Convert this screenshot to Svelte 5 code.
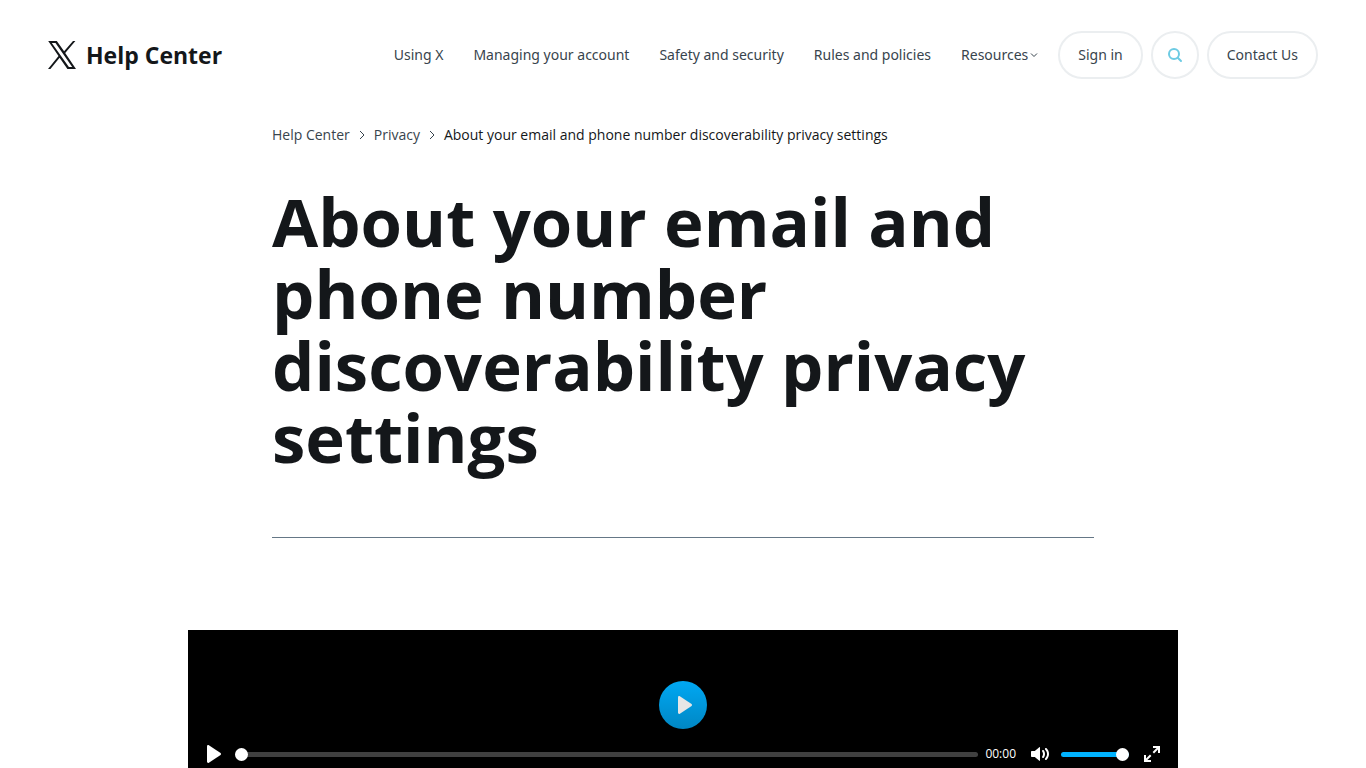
<script lang="ts">
	const title = 'About your email and phone number discoverability privacy settings';

	const navLinks = ['Using X', 'Managing your account', 'Safety and security', 'Rules and policies'];
	const crumbs = ['Help Center', 'Privacy'];

	let position = $state(0);
	let volume = $state(100);
	let muted = $state(false);
	let playing = $state(false);

	function togglePlay() {
		playing = !playing;
	}
</script>

<header class="header">
	<a class="brand" href="/en">
		<svg class="logo" viewBox="0 0 28 28" aria-hidden="true">
			<path
				fill-rule="evenodd"
				d="M0.2 0H8.8L16.1 10.3L25 0H27.4L17.2 11.9L28 28H19.4L11.6 16.7L2.4 28H0L10.5 15.1ZM3.8 2L20.9 26H24.2L7.5 2Z"
			/>
		</svg>
		<span>Help Center</span>
	</a>

	<nav class="nav" aria-label="Main">
		{#each navLinks as link}
			<a href="/en">{link}</a>
		{/each}
		<button class="menu" type="button">
			Resources
			<svg class="caret" viewBox="0 0 8 6" aria-hidden="true">
				<path d="M1 1.5L4 4.5L7 1.5" />
			</svg>
		</button>
	</nav>

	<div class="actions">
		<a class="pill" href="/login">Sign in</a>
		<button class="pill round" type="button" aria-label="Search">
			<svg class="search" viewBox="0 0 16 16" aria-hidden="true">
				<circle cx="7" cy="7" r="5" />
				<path d="M10.8 10.8L14 14" />
			</svg>
		</button>
		<a class="pill" href="/contact">Contact Us</a>
	</div>
</header>

<main>
	<div class="intro">
		<nav class="crumbs" aria-label="Breadcrumb">
			{#each crumbs as crumb}
				<a href="/en">{crumb}</a>
				<svg class="sep" viewBox="0 0 8 10" aria-hidden="true">
					<path d="M2 1L6 5L2 9" />
				</svg>
			{/each}
			<span aria-current="page">{title}</span>
		</nav>
		<h1>{title}</h1>
	</div>

	<section class="player" aria-label="Video player">
		<button class="big-play" type="button" aria-label="Play video" onclick={togglePlay}>
			<svg viewBox="0 0 18 18" aria-hidden="true">
				<path d="M15.56 8.1L3.87.23C3.05-.3 2 .25 2 1.22v15.56c0 .97 1.05 1.52 1.87.99l11.69-7.87c.59-.42.59-1.38 0-1.8z" />
			</svg>
		</button>

		<div class="controls">
			<button type="button" aria-label="Play" onclick={togglePlay}>
				<svg viewBox="0 0 18 18" aria-hidden="true">
					<path d="M15.56 8.1L3.87.23C3.05-.3 2 .25 2 1.22v15.56c0 .97 1.05 1.52 1.87.99l11.69-7.87c.59-.42.59-1.38 0-1.8z" />
				</svg>
			</button>
			<input
				class="seek"
				type="range"
				min="0"
				max="100"
				aria-label="Seek"
				bind:value={position}
				style="--value: {position}%"
			/>
			<span class="time">00:00</span>
			<button class="mute" type="button" aria-label="Mute" aria-pressed={muted} onclick={() => (muted = !muted)}>
				<svg viewBox="0 0 18 18" aria-hidden="true">
					<path d="M15.6 3.3c-.4-.4-1-.4-1.4 0s-.4 1 0 1.4C15.4 5.9 16 7.4 16 9s-.6 3.1-1.8 4.3c-.4.4-.4 1 0 1.4.2.2.5.3.7.3.3 0 .5-.1.7-.3C17.1 13.2 18 11.2 18 9s-.9-4.2-2.4-5.7z" />
					<path d="M11.28 5.28c-.38.39-.37 1.02.03 1.46.44.48.69 1.34.69 2.26s-.25 1.78-.69 2.26c-.37.4-.37 1.08.02 1.47.4.38 1.03.36 1.4-.05C13.54 11.8 14 10.44 14 9s-.46-2.8-1.27-3.68c-.38-.41-1.05-.44-1.45-.04zM3.79 6H.71C.32 6 0 6.32 0 6.71v4.57c0 .4.32.72.71.72h3.08l4.5 3.87c.29.27.71.13.71-.36V2.49c0-.49-.42-.63-.71-.36z" />
				</svg>
			</button>
			<input
				class="volume"
				type="range"
				min="0"
				max="100"
				aria-label="Volume"
				bind:value={volume}
				style="--value: {volume}%"
			/>
			<button class="fullscreen" type="button" aria-label="Enter fullscreen">
				<svg viewBox="0 0 18 18" aria-hidden="true">
					<path d="M10 3h3.6l-4 4L11 8.4l4-4V8h2V1h-7zM7 9.6l-4 4V10H1v7h7v-2H4.4l4-4z" />
				</svg>
			</button>
		</div>
	</section>
</main>

<style>
	:global(body) {
		margin: 0;
		background: #fff;
		color: #14171a;
		font-family: 'Segoe UI', 'Open Sans', 'Noto Sans', sans-serif;
		font-size: 14px;
		line-height: 20px;
	}

	a {
		color: inherit;
		text-decoration: none;
	}

	button {
		padding: 0;
		border: 0;
		background: none;
		color: inherit;
		font: inherit;
		cursor: pointer;
	}

	svg {
		display: block;
	}

	.header {
		display: flex;
		align-items: center;
		padding: 31px 48px 0;
	}

	.brand {
		display: flex;
		align-items: center;
		gap: 10px;
		font-size: 23px;
		font-weight: 700;
		line-height: 32px;
		white-space: nowrap;
	}

	.logo {
		width: 28px;
		height: 28px;
		fill: #14171a;
	}

	.nav,
	.actions {
		display: flex;
		align-items: center;
		color: #38444d;
		font-family: 'Segoe UI', 'Noto Sans', sans-serif;
		line-height: 22px;
		white-space: nowrap;
	}

	.nav {
		gap: 30px;
		margin-left: auto;
	}

	.menu {
		display: flex;
		align-items: center;
		gap: 2px;
	}

	.caret {
		width: 8px;
		height: 6px;
		fill: none;
		stroke: #38444d;
	}

	.actions {
		gap: 8px;
		margin-left: 20px;
	}

	.pill {
		display: flex;
		align-items: center;
		justify-content: center;
		box-sizing: border-box;
		height: 48px;
		padding: 0 18px;
		border: 2px solid #ebeef0;
		border-radius: 24px;
	}

	.round {
		width: 48px;
		padding: 0;
	}

	.search {
		width: 16px;
		height: 16px;
		fill: none;
		stroke: #6dcbe3;
		stroke-width: 2;
		stroke-linecap: round;
	}

	.intro {
		max-width: 822px;
		margin: 46px auto 0;
		padding-bottom: 64px;
		border-bottom: 1px solid #657786;
	}

	.crumbs {
		display: flex;
		align-items: center;
		gap: 8px;
		color: #38444d;
	}

	.crumbs span {
		color: #14171a;
	}

	.sep {
		width: 8px;
		height: 10px;
		fill: none;
		stroke: #38444d;
	}

	h1 {
		margin: 40px 0 0;
		font-size: 67px;
		font-weight: 700;
		line-height: 72px;
	}

	.player {
		position: relative;
		display: flex;
		align-items: flex-end;
		max-width: 990px;
		height: 150px;
		margin: 92px auto 0;
		background: #000;
		color: #fff;
	}

	.player svg {
		width: 18px;
		height: 18px;
		fill: currentColor;
	}

	/* sits centred over the video surface */
	.big-play {
		position: absolute;
		top: 50%;
		left: 50%;
		display: grid;
		place-items: center;
		width: 48px;
		height: 48px;
		padding-left: 4px;
		border-radius: 50%;
		background: linear-gradient(#00a8f3, #0087c4);
		color: #e6e6e6;
		transform: translate(-50%, -50%);
	}

	.controls {
		display: flex;
		align-items: center;
		flex: 1;
		padding: 10px;
	}

	.controls button {
		padding: 7px;
	}

	.seek,
	.volume {
		appearance: none;
		height: 20px;
		margin: 0;
		background: transparent;
	}

	.seek {
		flex: 1;
		min-width: 0;
		margin: 0 7px 0 5px;
	}

	.volume {
		width: 68px;
		margin: 0 7px 0 5px;
	}

	.seek::-webkit-slider-runnable-track,
	.volume::-webkit-slider-runnable-track {
		height: 5px;
		border-radius: 3px;
		background: linear-gradient(to right, #00b3ff var(--value), #404040 var(--value));
	}

	.seek::-webkit-slider-thumb,
	.volume::-webkit-slider-thumb {
		appearance: none;
		width: 13px;
		height: 13px;
		margin-top: -4px;
		border-radius: 50%;
		background: #fff;
	}

	.time {
		font-size: 12px;
	}

	.controls .mute {
		margin-left: 8px;
	}
</style>
